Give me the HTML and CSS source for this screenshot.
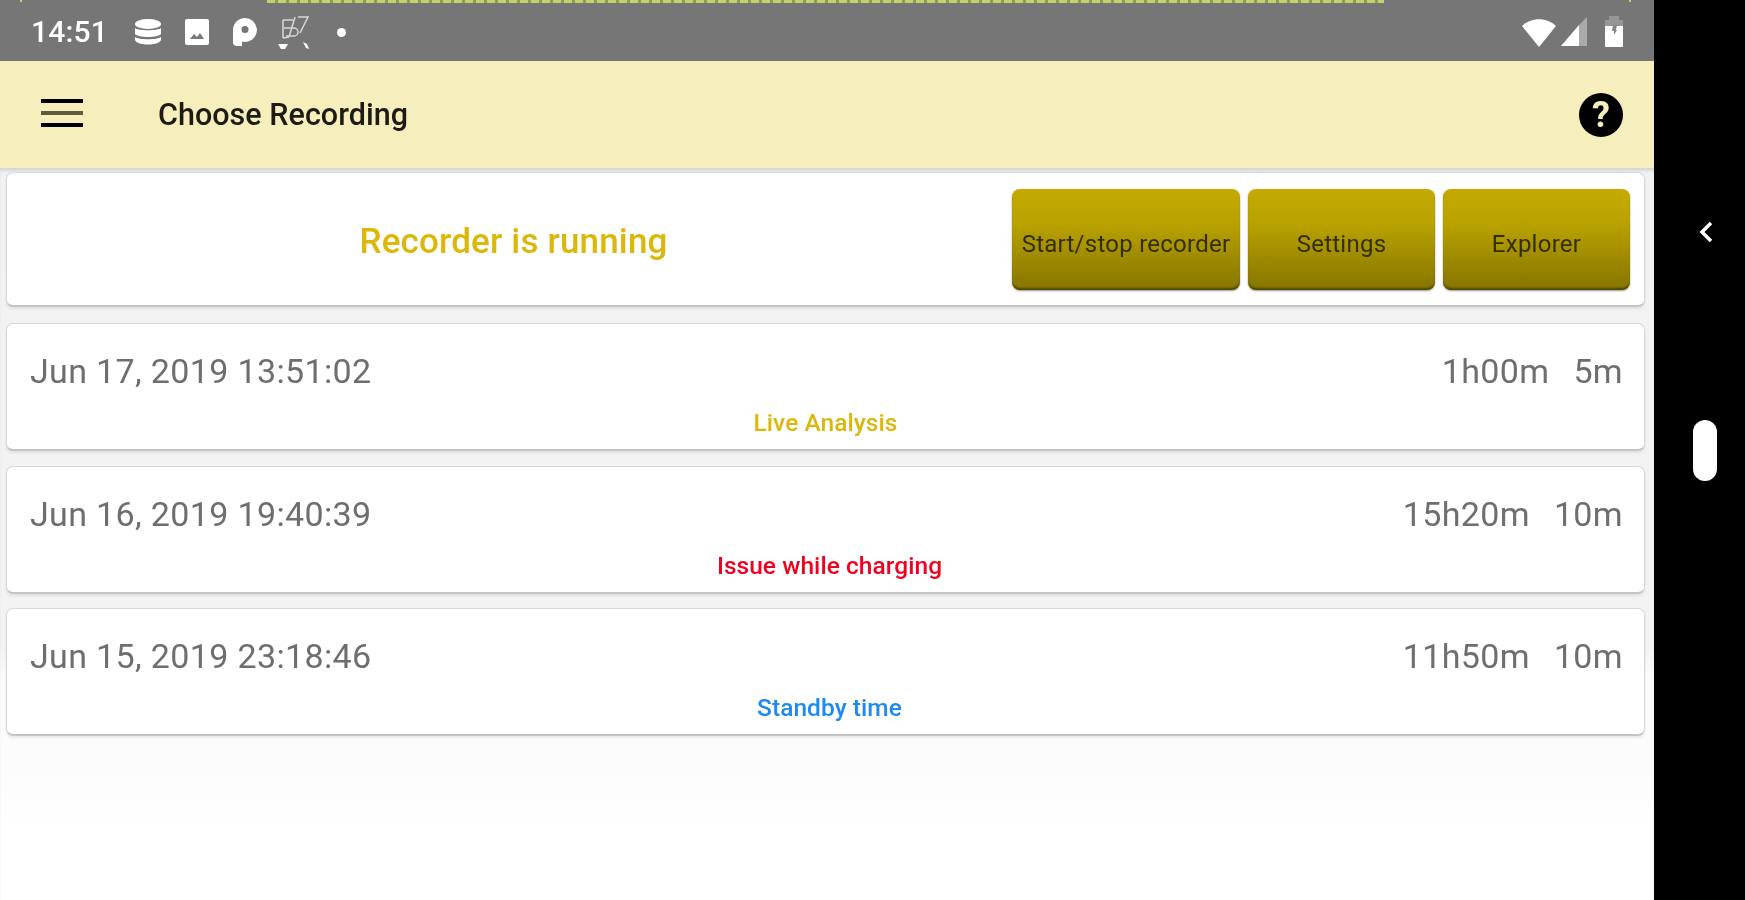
FILE: index.html
```html
<!DOCTYPE html>
<html lang="en">
<head>
<meta charset="utf-8">
<title>Choose Recording</title>
<link rel="stylesheet" href="styles.css">
</head>
<body>
<div class="screen">
  <main class="phone">
    <header class="status">
      <div class="stripe-row"><span class="tick"></span><span class="stripe"></span><span class="tick"></span></div>
      <div class="status-row">
        <span class="time">14:51</span>
        <svg class="ic ic-db" viewBox="0 0 30 28"><g fill="#fff"><ellipse cx="15" cy="6" rx="13" ry="5"/><path d="M2 10c3 3 23 3 26 0v6c-3 4-23 4-26 0z"/><path d="M2 19c3 3 23 3 26 0v3c-2 6-24 6-26 0z"/></g></svg>
        <svg class="ic ic-img" viewBox="0 0 26 28"><path fill="#fff" d="M3 1h20a2 2 0 0 1 2 2v22a2 2 0 0 1-2 2H3a2 2 0 0 1-2-2V3a2 2 0 0 1 2-2z"/><path fill="#777" d="M6 21l4-5 3 3 3-4 4 6z"/></svg>
        <svg class="ic ic-p" viewBox="0 0 26 30"><path fill="#fff" fill-rule="evenodd" d="M13 1a12 12 0 0 1 3 23.6c-3 .8-5 .4-6 0V29H5c-2 0-4-1-4-4V13A12 12 0 0 1 13 1zm0 8a3.500 3.500 0 1 0 0 7 3.500 3.500 0 0 0 0-7z"/></svg>
        <svg class="ic ic-chart" viewBox="0 0 34 36"><g fill="none" stroke="#d8d8d8" stroke-width="1.500"><path d="M6 6h10M6 6v18M6 24l6 -1"/><path d="M18 3l-6 20M7 14h10a4 4 0 0 1 0 8h-8"/><path d="M21 3h10l-8 16"/></g><path fill="#fff" d="M1 30h10l-3 5H4zM26 28l4 2 2 5-3-1z"/></svg>
        <span class="dot"></span>
        <span class="spacer"></span>
        <svg class="ic ic-wifi" viewBox="0 0 36 30"><path fill="#fff" d="M1 9C10 0 26 0 35 9L18 30z"/></svg>
        <svg class="ic ic-signal" viewBox="0 0 28 30"><path fill="#fff" d="M1 29L19 8v21z"/><path fill="#aaa" d="M19 8l8-8v29h-8z"/></svg>
        <svg class="ic ic-batt" viewBox="0 0 22 32"><path fill="#969696" d="M6 0h10v4h4v6H2V4h4z"/><path fill="#fff" d="M2 10h18v20a1 1 0 0 1-1 1H3a1 1 0 0 1-1-1z"/><path fill="#888" d="M10 9h4l-1 5h1l-3 5v-4H9z"/></svg>
      </div>
    </header>
    <div class="appbar">
      <div class="burger"><span></span><span class="mid"></span><span></span></div>
      <h1 class="title">Choose Recording</h1>
      <span class="help">?</span>
    </div>
    <div class="content">
      <section class="card top">
        <div class="running">Recorder is running</div>
        <div class="buttons">
          <button class="btn wide">Start/stop recorder</button>
          <button class="btn">Settings</button>
          <button class="btn">Explorer</button>
        </div>
      </section>
      <section class="card rec">
        <div class="rec-row"><span>Jun 17, 2019 13:51:02</span><span class="dur"><span>1h00m</span><span>5m</span></span></div>
        <div class="tag gold">Live Analysis</div>
      </section>
      <section class="card rec">
        <div class="rec-row"><span>Jun 16, 2019 19:40:39</span><span class="dur"><span>15h20m</span><span>10m</span></span></div>
        <div class="tag red">Issue while charging</div>
      </section>
      <section class="card rec">
        <div class="rec-row"><span>Jun 15, 2019 23:18:46</span><span class="dur"><span>11h50m</span><span>10m</span></span></div>
        <div class="tag blue">Standby time</div>
      </section>
    </div>
  </main>
  <aside class="rail">
    <svg class="chev" viewBox="0 0 16 24"><path d="M13 3L4 12l9 9" fill="none" stroke="#fff" stroke-width="3.500"/></svg>
    <span class="pill"></span>
  </aside>
</div>
</body>
</html>
```
FILE: styles.css
```css
* { box-sizing: border-box; }
html, body { margin: 0; height: 100%; overflow: hidden; background: #000; }
body { font-family: Roboto, "Liberation Sans", sans-serif; }

.screen { display: flex; width: 1745px; height: 900px; }
.phone { width: 1654px; height: 900px; display: flex; flex-direction: column; background: #fff; }
.rail { width: 91px; background: #000; display: flex; flex-direction: column; align-items: center; padding: 220px 0 0 10px; }
.chev { width: 16px; height: 24px; margin-left: 2px; filter: blur(.5px); }
.pill { width: 24px; height: 61px; margin-top: 176px; border-radius: 12px; background: #fff; filter: blur(.6px); }

.status { height: 61px; background: #767676; flex: none; display: flex; flex-direction: column; }
.stripe-row { height: 3px; flex: none; display: flex; justify-content: space-between; padding: 0 23px 0 20px; filter: blur(.4px); }
.tick { width: 2px; height: 2px; background: #c6cf6a; }
.stripe { width: 1117px; background: repeating-linear-gradient(90deg, #c6cf6a 0 8px, #8f9a5a 8px 11px); }
.status-row { display: flex; align-items: center; flex: 1; padding: 0 29px 0 31px; filter: blur(.5px); }
.time { color: #fff; font-size: 30px; font-weight: 500; line-height: 32px; width: 102px; letter-spacing: .2px; }
.ic { display: block; flex: none; }
.ic-db { width: 30px; height: 28px; margin-right: 21px; }
.ic-img { width: 26px; height: 28px; margin-right: 22px; }
.ic-p { width: 26px; height: 30px; margin-right: 19px; }
.ic-chart { width: 34px; height: 36px; margin-right: 26px; }
.dot { width: 9px; height: 9px; border-radius: 50%; background: #fff; }
.spacer { flex: 1; }
.ic-wifi { width: 36px; height: 30px; margin-right: 3px; }
.ic-signal { width: 28px; height: 30px; margin-right: 15px; }
.ic-batt { width: 22px; height: 32px; }

.appbar { height: 107px; flex: none; background: #f6efbd; display: flex; align-items: center; padding: 0 31px 0 41px; filter: blur(.5px); }
.burger { width: 42px; display: flex; flex-direction: column; gap: 8px; margin-bottom: 4px; }
.burger span { height: 4px; background: #000; display: block; }
.burger .mid { background: #5f5a3c; }
.title { margin: 0 0 0 75px; flex: 1; font-size: 30.5px; font-weight: 500; color: #1c1c14; line-height: 36px; letter-spacing: .03px; }
.help { width: 44px; height: 44px; border-radius: 50%; background: #000; color: #f6efbd; font-size: 36px; font-weight: 700; line-height: 44px; text-align: center; }

.content { flex: 1; padding: 4px 9px 0 6px; display: flex; flex-direction: column; gap: 14.5px; background: linear-gradient(#f2f2f2 0, #f3f3f3 480px, #fcfcfc 510px, #fcfcfc 600px, #fff 660px); box-shadow: inset 0 4px 3px -1px #d6d6d6; }
.card { background: #fff; border-radius: 7px; border: 1px solid #d6d6d6; border-bottom: 2px solid #c4c4c4; box-shadow: 0 2px 3px rgba(0,0,0,.08); filter: blur(.4px); flex: none; }
.top { height: 135px; display: flex; align-items: center; padding: 0 14px 0 0; margin-bottom: 1.5px; }
.running { flex: 1; text-align: center; padding: 4px 0 0 6px; margin-right: -2px; color: #dcb70a; font-size: 35px; font-weight: 500; letter-spacing: .15px; }
.buttons { display: flex; gap: 8px; width: 618px; flex: none; }
.btn { flex: 187px 0 0; height: 101px; padding: 10px 0 0; border: 0; border-radius: 8px; font: 400 24px Roboto, sans-serif; letter-spacing: .25px; color: #332e00; background: linear-gradient(#c4aa00 0, #b9a100 35%, #857500 100%); box-shadow: inset 0 -3px 2px -1px #4f4700, 0 1px 2px rgba(0,0,0,.4); white-space: nowrap; }
.wide { flex-basis: 228px; }

.rec { height: 128px; padding: 28px 21px 0 23px; }
.rec-row { display: flex; justify-content: space-between; font-size: 34px; line-height: 38px; color: #6e6e6e; letter-spacing: .35px; }
.dur { display: flex; gap: 24px; }
.tag { text-align: center; font-size: 24.5px; font-weight: 500; line-height: 28px; margin-top: 19px; letter-spacing: .05px; padding-left: 6px; }
.gold { padding: 0 2px 0 0; color: #dcb70a; }
.red { color: #f2001f; }
.blue { color: #1e8af0; }
```
